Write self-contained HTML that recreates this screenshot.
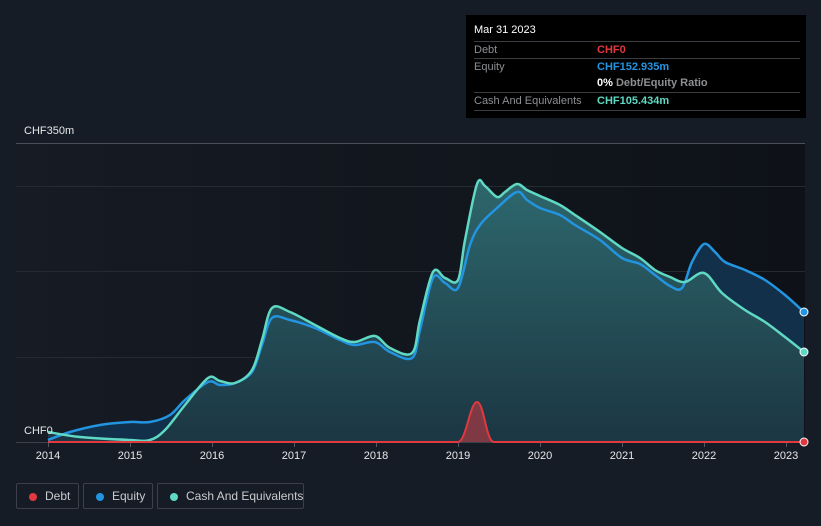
<!DOCTYPE html>
<html><head><meta charset="utf-8"><style>
body{margin:0;width:821px;height:526px;background:#161c26;font-family:"Liberation Sans",sans-serif;overflow:hidden;position:relative}
.tip{position:absolute;left:466px;top:15px;width:340px;height:103px;background:#000;color:#fff;font-size:11px}
.tip .r{position:absolute;left:8px;right:6px;border-top:1px solid #3a3d42;height:17px;line-height:17px;color:#8d8f93}
.tip .v{position:absolute;left:123px;font-weight:bold}
.leg{position:absolute;top:483px;height:26px;border:1px solid #3b404a;border-radius:2px;color:#c9cbcf;font-size:12px;line-height:24px;box-sizing:border-box;white-space:nowrap}
.leg i{position:absolute;left:12px;top:9px;width:8px;height:8px;border-radius:50%}
.ax{position:absolute;top:450px;color:#e6e7e9;font-size:11px;width:40px;text-align:center}
</style></head><body>
<div class="tip">
<div style="position:absolute;left:8px;top:9px;font-size:11px">Mar 31 2023</div>
<div class="r" style="top:26px">Debt<span class="v" style="color:#e0393f">CHF0</span></div>
<div class="r" style="top:43px">Equity<span class="v" style="color:#2394e0">CHF152.935m</span></div>
<div class="r" style="top:60px;border-top:none"><span class="v" style="color:#fff">0% <span style="color:#8d8f93;font-weight:bold">Debt/Equity Ratio</span></span></div>
<div class="r" style="top:77px;border-bottom:1px solid #3a3d42">Cash And Equivalents<span class="v" style="color:#5fd9c4">CHF105.434m</span></div>
</div>
<div style="position:absolute;left:24px;top:125px;color:#e6e7e9;font-size:11px">CHF350m</div>
<svg width="821" height="526" style="position:absolute;left:0;top:0">
<defs>
<linearGradient id="bg" x1="0" x2="1"><stop offset="0" stop-color="#161b24"/><stop offset="1" stop-color="#0e1218"/></linearGradient>
<linearGradient id="cf" gradientUnits="userSpaceOnUse" x1="0" y1="180" x2="0" y2="443"><stop offset="0" stop-color="#2f6b70"/><stop offset="1" stop-color="#1c3642"/></linearGradient>
</defs>
<rect x="16" y="143" width="789" height="300" fill="url(#bg)"/>
<g stroke="#262b33" stroke-width="1"><line x1="16" x2="805" y1="186.5" y2="186.5"/><line x1="16" x2="805" y1="271.5" y2="271.5"/><line x1="16" x2="805" y1="357.5" y2="357.5"/></g>
<line x1="16" x2="805" y1="143.5" y2="143.5" stroke="#4a4e55"/>
<path id="ef" fill="#12304a"/>
<path id="cfp" fill="url(#cf)" opacity="0.95"/>
<line x1="16" x2="805" y1="442.5" y2="442.5" stroke="#3d424a"/>
<path id="el" fill="none" stroke="#2394e0" stroke-width="2.5"/>
<path id="cl" fill="none" stroke="#5fd9c4" stroke-width="2.5"/>
<path id="df" fill="#8a3a44" opacity="0.9"/>
<path id="dl" fill="none" stroke="#e0393f" stroke-width="2"/>
<circle cx="804" cy="312" r="4" fill="#2394e0" stroke="#fff" stroke-width="1"/>
<circle cx="804" cy="352" r="4" fill="#5fd9c4" stroke="#fff" stroke-width="1"/>
<circle cx="804" cy="442" r="4" fill="#e0393f" stroke="#fff" stroke-width="1"/>
<g stroke="#555a62"><line x1="48.5" x2="48.5" y1="443" y2="447"/><line x1="130.5" x2="130.5" y1="443" y2="447"/><line x1="212.5" x2="212.5" y1="443" y2="447"/><line x1="294.5" x2="294.5" y1="443" y2="447"/><line x1="376.5" x2="376.5" y1="443" y2="447"/><line x1="458.5" x2="458.5" y1="443" y2="447"/><line x1="540.5" x2="540.5" y1="443" y2="447"/><line x1="622.5" x2="622.5" y1="443" y2="447"/><line x1="704.5" x2="704.5" y1="443" y2="447"/><line x1="786.5" x2="786.5" y1="443" y2="447"/></g>
</svg>
<div style="position:absolute;left:24px;top:425px;color:#e6e7e9;font-size:11px">CHF0</div>
<div class="ax" style="left:28px">2014</div><div class="ax" style="left:110px">2015</div><div class="ax" style="left:192px">2016</div><div class="ax" style="left:274px">2017</div><div class="ax" style="left:356px">2018</div><div class="ax" style="left:438px">2019</div><div class="ax" style="left:520px">2020</div><div class="ax" style="left:602px">2021</div><div class="ax" style="left:684px">2022</div><div class="ax" style="left:766px">2023</div>
<div class="leg" style="left:16px;width:63px"><i style="background:#e0393f"></i><span style="position:absolute;left:28px">Debt</span></div>
<div class="leg" style="left:83px;width:70px"><i style="background:#2394e0"></i><span style="position:absolute;left:28px">Equity</span></div>
<div class="leg" style="left:157px;width:147px"><i style="background:#5fd9c4"></i><span style="position:absolute;left:28px">Cash And Equivalents</span></div>
<script>
function sm(p,t){t=t||6;let d="M"+p[0][0]+","+p[0][1];for(let i=0;i<p.length-1;i++){const a=p[i-1]||p[i],b=p[i],c=p[i+1],e=p[i+2]||c;d+=" C"+(b[0]+(c[0]-a[0])/t).toFixed(1)+","+(b[1]+(c[1]-a[1])/t).toFixed(1)+" "+(c[0]-(e[0]-b[0])/t).toFixed(1)+","+(c[1]-(e[1]-b[1])/t).toFixed(1)+" "+c[0]+","+c[1];}return d;}
const C=[[48,432],[80,437],[130,440],[150,440],[165,430],[185,405],[208,378],[220,381],[235,383],[252,370],[262,340],[272,308],[290,312],[315,325],[340,338],[355,342],[375,336],[390,348],[412,353],[420,320],[433,272],[445,278],[458,280],[465,240],[477,184],[485,186],[497,197],[505,192],[517,184],[527,190],[540,196],[560,205],[575,215],[600,232],[622,248],[640,258],[655,270],[670,277],[685,282],[704,273],[722,293],[745,310],[765,322],[785,337],[804,352]];
const E=[[48,440],[70,432],[100,425],[130,422],[150,422],[170,415],[185,400],[208,382],[220,385],[235,383],[252,372],[262,345],[272,318],[290,320],[315,328],[340,340],[355,345],[375,342],[390,352],[412,358],[420,330],[433,278],[445,283],[458,288],[470,245],[480,225],[497,208],[517,192],[527,200],[540,208],[560,215],[575,225],[600,240],[622,258],[640,264],[655,275],[670,286],[682,288],[692,262],[704,244],[715,252],[725,262],[745,270],[765,280],[785,295],[804,312]];
const set=(id,a,v)=>document.getElementById(id).setAttribute(a,v);
const ce=sm(C),ee=sm(E);
const de="M48,442 L458,442 C466,442 470,402 477,402 C484,402 486,442 494,442 L804,442";
set("cl","d",ce);set("el","d",ee);set("dl","d",de);
set("cfp","d",ce+" L804,442 L48,442Z");set("ef","d",ee+" L804,442 L48,442Z");set("df","d",de+" Z");
</script>
</body></html>
